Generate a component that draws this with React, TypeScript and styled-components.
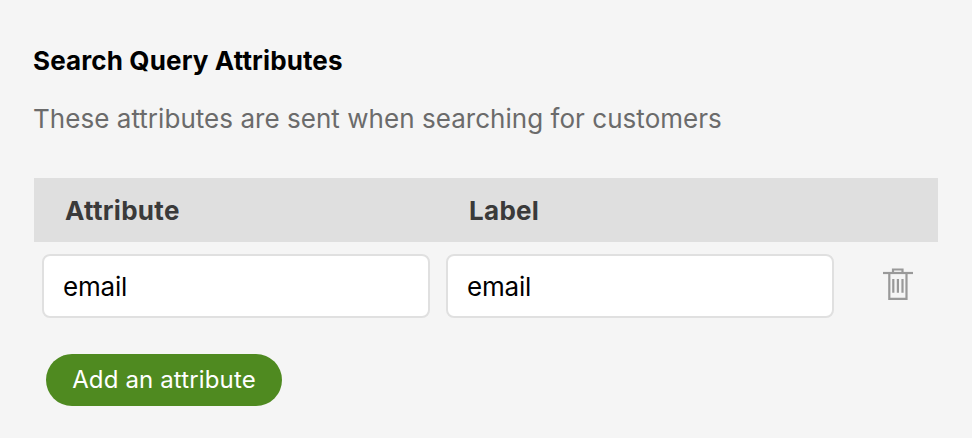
import styled, { createGlobalStyle } from "styled-components";

const GlobalStyle = createGlobalStyle`
  html, body {
    margin: 0;
    padding: 0;
    background: #f5f5f5;
    font-family: Inter, "Noto Sans", sans-serif;
  }
`;

const Page = styled.div`
  width: 972px;
  height: 438px;
  box-sizing: border-box;
  padding: 46px 34px 0;
`;

const Title = styled.h2`
  margin: 0 0 0 -1px;
  font-size: 26px;
  line-height: 30px;
  font-weight: 700;
  letter-spacing: 0.13px;
  color: #000;
`;

const Description = styled.p`
  margin: 28px 0 0 -1px;
  font-size: 26px;
  line-height: 30px;
  font-weight: 400;
  letter-spacing: 0.04px;
  color: #6b6b6b;
`;

const TableHead = styled.div`
  margin-top: 44px;
  height: 64px;
  background: #dfdfdf;
  display: grid;
  grid-template-columns: 404px 1fr;
  align-items: center;
  padding-left: 31px;
  font-size: 26px;
  font-weight: 700;
  letter-spacing: 0.3px;
  color: #3a3a3a;
`;

const Row = styled.div`
  display: flex;
  align-items: center;
  gap: 16px;
  padding: 12px 0 0 8px;
`;

const Field = styled.input`
  width: 388px;
  height: 64px;
  box-sizing: border-box;
  border: 2px solid #e0e0e0;
  border-radius: 8px;
  background: #fff;
  padding: 0 19px;
  font-family: inherit;
  font-size: 26px;
  letter-spacing: -0.2px;
  color: #000;
  outline: none;
`;

const IconButton = styled.button`
  margin: -4px 0 0 33px;
  padding: 0;
  border: 0;
  background: none;
  display: flex;
  color: #999;
`;

const AddButton = styled.button`
  display: block;
  margin: 36px 0 0 12px;
  width: 236px;
  height: 52px;
  padding: 0 0 2px;
  border: 0;
  border-radius: 26px;
  background: #4f8a20;
  color: #fff;
  font-family: inherit;
  font-size: 24px;
  font-weight: 400;
  letter-spacing: 0.14px;
`;

function TrashIcon() {
  return (
    <svg width="30" height="32" viewBox="0 0 30 32" fill="none" stroke="currentColor" strokeWidth="2.2">
      <path d="M0 5h30" />
      <path d="M10 5V1.500h9.500V5" />
      <path d="M6.300 5v25.800h17.200V5" />
      <path d="M10.300 11v13.700M14.900 11v13.700M19.500 11v13.700" />
    </svg>
  );
}

export default function App() {
  return (
    <Page>
      <GlobalStyle />
      <Title>Search Query Attributes</Title>
      <Description>These attributes are sent when searching for customers</Description>
      <TableHead>
        <span>Attribute</span>
        <span>Label</span>
      </TableHead>
      <Row>
        <Field defaultValue="email" />
        <Field defaultValue="email" />
        <IconButton aria-label="Delete">
          <TrashIcon />
        </IconButton>
      </Row>
      <AddButton>Add an attribute</AddButton>
    </Page>
  );
}
